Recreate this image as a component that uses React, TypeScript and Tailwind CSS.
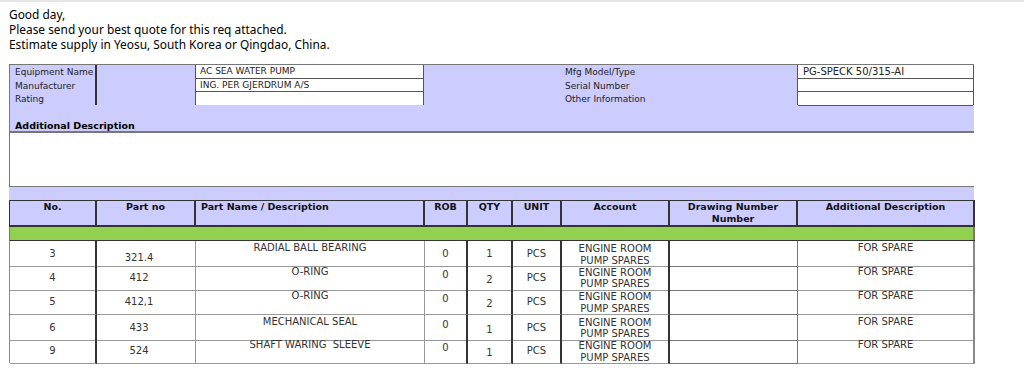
import React from "react";

const cols = "grid-cols-[87px_99px_229px_43px_45px_49px_108px_128px_177px]";

type Row = {
  no: string;
  part: string;
  name: string;
  qty: string;
};

const rows: Row[] = [
  { no: "3", part: "321.4", name: "RADIAL BALL BEARING", qty: "1" },
  { no: "4", part: "412", name: "O-RING", qty: "2" },
  { no: "5", part: "412,1", name: "O-RING", qty: "2" },
  { no: "6", part: "433", name: "MECHANICAL SEAL", qty: "1" },
  { no: "9", part: "524", name: "SHAFT WARING  SLEEVE", qty: "1" },
];

const headers = [
  { label: "No.", cls: "text-center" },
  { label: "Part no", cls: "text-center" },
  { label: "Part Name / Description", cls: "text-left pl-[5px]" },
  { label: "ROB", cls: "text-center" },
  { label: "QTY", cls: "text-center" },
  { label: "UNIT", cls: "text-center" },
  { label: "Account", cls: "text-center" },
  { label: "Drawing Number Number", cls: "text-center px-[10px]" },
  { label: "Additional Description", cls: "text-center" },
];

function InfoBlock() {
  return (
    <div className="ml-[9px] w-[965px] bg-[#ccccff] text-[9px] text-[#222]">
      <div className="flex h-[41px] border-t border-l border-[#777]">
        <div className="w-[87px] border-r-2 border-[#333] pl-[5px] leading-[13.5px] pt-[1px]">
          <div>Equipment Name</div>
          <div>Manufacturer</div>
          <div>Rating</div>
        </div>
        <div className="w-[98px]" />
        <div className="w-[229px] bg-white border-l border-r border-[#555]">
          <div className="h-[14px] border-b border-[#555] pl-[4px] leading-[13px]">
            AC SEA WATER PUMP
          </div>
          <div className="h-[13px] border-b border-[#555] pl-[4px] leading-[12px]">
            ING. PER GJERDRUM A/S
          </div>
          <div className="h-[14px]" />
        </div>
        <div className="w-[373px] pl-[141px] leading-[13.5px] pt-[1px]">
          <div>Mfg Model/Type</div>
          <div>Serial Number</div>
          <div>Other Information</div>
        </div>
        <div className="w-[177px] bg-white border-l border-r border-[#555]">
          <div className="h-[14px] border-b border-[#555] pl-[5px] leading-[13px] text-[10px]">
            PG-SPECK 50/315-AI
          </div>
          <div className="h-[13px] border-b border-[#555]" />
          <div className="h-[14px] border-b border-[#555]" />
        </div>
      </div>
      <div className="h-[26px] border-l border-[#777] flex items-end pl-[5px] font-bold text-[9.5px] leading-[11px] text-black">
        Additional Description
      </div>
      <div className="h-[56px] bg-white border-t-2 border-[#333] border-l border-b border-[#777]" />
      <div className="h-[13px]" />
    </div>
  );
}

function PartsTable() {
  return (
    <div className="ml-[9px] w-[966px] text-[10px]">
      <div className={`grid ${cols} bg-[#ccccff] border-t border-l border-[#333] h-[27px]`}>
        {headers.map((h) => (
          <div
            key={h.label}
            className={`border-r-2 border-b-2 border-[#333] font-bold text-[9.5px] leading-[12px] text-[#111] ${h.cls}`}
          >
            {h.label}
          </div>
        ))}
      </div>
      <div className="h-[13px] bg-[#92d050] border-l border-r-2 border-[#777]" />
      {rows.map((r, i) => (
        <div
          key={i}
          className={`grid ${cols} h-[24.5px] border-l border-[#888] text-[#333] ${
            i === 0 ? "border-t border-t-[#333]" : ""
          } ${i === 3 ? "border-t border-t-[#222]" : ""}`}
        >
          <div className="border-r-2 border-b border-r-[#333] border-b-[#999] flex items-center justify-center">
            {r.no}
          </div>
          <div
            className={`border-r border-b border-[#999] flex justify-center pr-[14px] ${
              i === 0 ? "items-end pb-[1px]" : "items-center"
            }`}
          >
            {r.part}
          </div>
          <div className="border-r border-b border-[#999] text-center pt-[1px] leading-[12px] whitespace-pre">
            {r.name}
          </div>
          <div
            className={`border-r-2 border-b border-r-[#333] border-b-[#999] flex justify-center ${
              i === 0 ? "items-center" : "items-start pt-[2px]"
            }`}
          >
            0
          </div>
          <div
            className={`border-r-2 border-b border-r-[#333] border-b-[#999] flex justify-center ${
              i === 0 ? "items-center" : "items-center pt-[4px]"
            }`}
          >
            {r.qty}
          </div>
          <div className="border-r-2 border-b border-r-[#333] border-b-[#999] flex items-center justify-center">
            PCS
          </div>
          <div className="border-r-2 border-b border-r-[#333] border-b-[#999] text-center leading-[11.5px] pt-[2px]">
            <div>ENGINE ROOM</div>
            <div>PUMP SPARES</div>
          </div>
          <div className="border-r border-b border-[#777]" />
          <div className="border-r-2 border-b border-r-[#888] border-b-[#999] text-center pt-[1px] leading-[12px]">
            FOR SPARE
          </div>
        </div>
      ))}
    </div>
  );
}

export default function App() {
  return (
    <div className="w-[1024px] h-[387px] bg-white border-t-2 border-[#e6e6e6] overflow-hidden font-['DejaVu_Sans',sans-serif]">
      <div className="pl-[9px] pt-[5px] text-[11.9px] leading-[15px] text-black font-['Noto_Sans',sans-serif]">
        <div>Good day,</div>
        <div>Please send your best quote for this req attached.</div>
        <div>Estimate supply in Yeosu, South Korea or Qingdao, China.</div>
      </div>
      <div className="h-[12px]" />
      <InfoBlock />
      <PartsTable />
    </div>
  );
}
